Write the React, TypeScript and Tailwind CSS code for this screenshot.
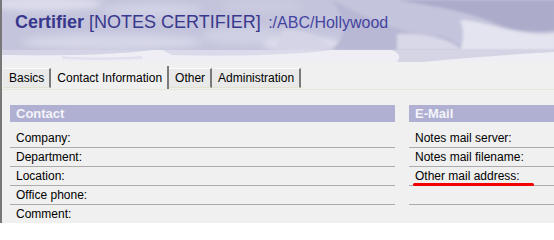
const font = { fontFamily: '"Liberation Sans", Arial, sans-serif' };

const contactRows = ["Company:", "Department:", "Location:", "Office phone:", "Comment:"];
const mailRows = ["Notes mail server:", "Notes mail filename:", "Other mail address:", ""];

const tabs = [
  { label: "Basics", active: false },
  { label: "Contact Information", active: true },
  { label: "Other", active: false },
  { label: "Administration", active: false },
];

// cloudy lavender picture behind the title
const Banner = () => (
  <div className="relative h-[50px] bg-[#c3c3dc] overflow-hidden">
    <svg className="absolute inset-0" width="554" height="50" viewBox="0 0 554 50">
      <defs>
        <filter id="soft" x="-20%" y="-50%" width="140%" height="200%">
          <feGaussianBlur stdDeviation="3" />
        </filter>
        <filter id="softer" x="-20%" y="-50%" width="140%" height="200%">
          <feGaussianBlur stdDeviation="1.5" />
        </filter>
      </defs>
      <rect width="554" height="50" fill="#c4c4dc" />
      <g filter="url(#soft)">
        <ellipse cx="40" cy="4" rx="60" ry="7" fill="#dcdcec" />
        <ellipse cx="150" cy="10" rx="50" ry="6" fill="#d2d2e6" />
        <ellipse cx="110" cy="42" rx="90" ry="8" fill="#d6d6e8" />
        <ellipse cx="240" cy="36" rx="40" ry="9" fill="#d0d0e4" />
        <ellipse cx="300" cy="44" rx="40" ry="8" fill="#dcdcec" />
        <ellipse cx="260" cy="6" rx="40" ry="6" fill="#cacae0" />
      </g>
      <g filter="url(#softer)">
        <path d="M330 0 C360 14 390 34 440 36 L470 50 L330 50 C340 40 350 30 330 0 Z" fill="#b8b8d4" />
        <path d="M395 0 L554 0 L554 30 C530 34 505 30 490 22 C460 10 430 6 395 0 Z" fill="#acacca" />
        <path d="M458 20 C485 20 515 38 554 33 L554 50 L458 50 C462 40 462 30 458 20 Z" fill="#e4e4f0" />
        <path d="M395 34 C425 32 450 40 460 50 L395 50 Z" fill="#d8d8e8" />
        <path d="M280 30 C300 28 320 36 330 50 L272 50 Z" fill="#d4d4e6" />
      </g>
    </svg>
    <div className="relative pl-[13px] pt-[13px] leading-[18px] whitespace-nowrap" style={font}>
      <span className="text-[18px] font-bold text-[#38388c]">Certifier</span>
      <span className="text-[18px] text-[#38388c]"> [NOTES CERTIFIER]</span>
      <span className="ml-[3px] text-[16px] text-[#4444a0]"> :/ABC/Hollywood</span>
    </div>
  </div>
);

const Strip = () => (
  <div className="relative h-[12px] bg-[#eeeef4] overflow-hidden">
    <svg className="absolute inset-0" width="554" height="12" viewBox="0 0 554 12">
      <path d="M0 0 L150 0 C120 4 80 6 0 5 Z" fill="#d4d4e6" />
      <path d="M60 6 C80 8 110 8 140 6 L140 9 C110 10 80 10 60 9 Z" fill="#e0e0ee" />
      <path d="M160 0 L330 0 C300 4 240 7 170 5 Z" fill="#dadaea" />
      <path d="M390 0 L554 0 L554 2 C500 5 460 8 420 12 L395 12 C400 6 396 3 390 0 Z" fill="#d4d4e4" />
    </svg>
  </div>
);

const Tabs = () => (
  <div className="flex items-end h-[28px] pl-[1px] border-b border-[#e6e6d8]">
    {tabs.map((t) => (
      <div
        key={t.label}
        className={
          t.active
            ? "h-[23px] pt-[2px] pl-[6px] pr-[5px] leading-[20px] text-[12px] text-black bg-[#f0f0f0] border-r-2 border-r-[#7a7a7a] whitespace-nowrap"
            : "h-[20px] mb-[1px] pl-[6px] pr-[5px] leading-[18px] text-[12px] text-black bg-[#e9e9e9] border-r-2 border-r-[#7a7a7a] border-b border-b-[#e2e2d0] border-t border-t-[#fafafa] whitespace-nowrap"
        }
        style={font}
      >
        {t.label}
      </div>
    ))}
  </div>
);

const Section = ({ title, rows, mark }: { title: string; rows: string[]; mark?: number }) => (
  <div className="w-[385px] shrink-0" style={font}>
    <div className="h-[17px] bg-[#b0b0d2] pl-[6px] text-[13px] font-bold leading-[17px] text-[#f4f4fa]">{title}</div>
    <div className="mt-[7px]">
      {rows.map((r, i) => (
        <div key={i} className="relative h-[19px] border-b border-[#acacac] pl-[6px] text-[12px] leading-[19px] text-black">
          {r}
          {mark === i && (
            <div className="absolute left-[4px] top-[16px] h-[3px] w-[121px] rounded-full bg-[#f20000]" />
          )}
        </div>
      ))}
    </div>
  </div>
);

export default function App() {
  return (
    <div className="w-[554px] h-[223px] overflow-hidden bg-[#f0f0f0] border-l-2 border-[#777777]">
      <Banner />
      <Strip />
      <Tabs />
      <div className="flex gap-[14px] pl-[8px] pt-[15px]">
        <Section title="Contact" rows={contactRows} />
        <Section title="E-Mail" rows={mailRows} mark={2} />
      </div>
    </div>
  );
}
